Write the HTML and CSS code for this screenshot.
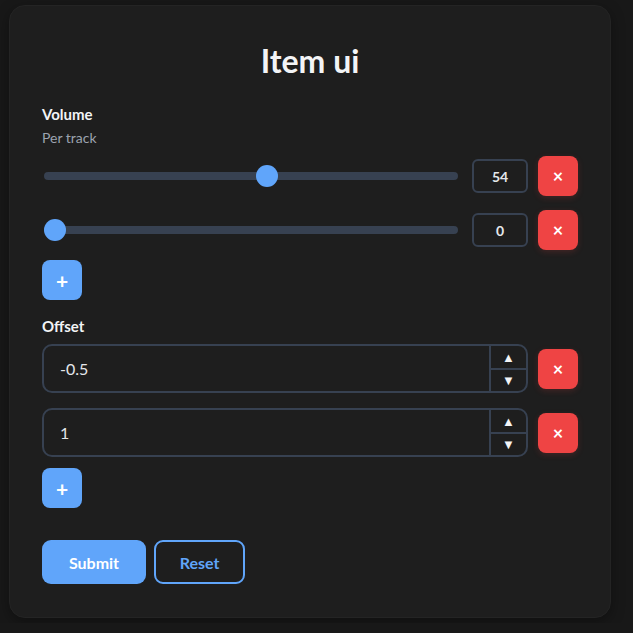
FILE: index.html
```html
<!DOCTYPE html>
<html lang="en">
<head>
<meta charset="utf-8">
<title>Item ui</title>
<link rel="stylesheet" href="styles.css">
</head>
<body>
<form class="card">
  <h1 class="title">Item ui</h1>

  <section class="group">
    <div class="label">Volume</div>
    <div class="hint">Per track</div>
    <div class="list list-sliders">
      <div class="row">
        <div class="slider-field">
          <input class="range" type="range" min="0" max="100" value="54">
          <div class="value-box">54</div>
        </div>
        <button type="button" class="btn-remove">×</button>
      </div>
      <div class="row">
        <div class="slider-field">
          <input class="range" type="range" min="0" max="100" value="0">
          <div class="value-box">0</div>
        </div>
        <button type="button" class="btn-remove">×</button>
      </div>
    </div>
    <button type="button" class="btn-add">+</button>
  </section>

  <section class="group group-offset">
    <div class="label">Offset</div>
    <div class="list list-numbers">
      <div class="row">
        <div class="number-field">
          <input class="number-input" type="text" value="-0.5">
          <div class="spin">
            <span class="spin-btn">▲</span>
            <span class="spin-btn">▼</span>
          </div>
        </div>
        <button type="button" class="btn-remove">×</button>
      </div>
      <div class="row">
        <div class="number-field">
          <input class="number-input" type="text" value="1">
          <div class="spin">
            <span class="spin-btn">▲</span>
            <span class="spin-btn">▼</span>
          </div>
        </div>
        <button type="button" class="btn-remove">×</button>
      </div>
    </div>
    <button type="button" class="btn-add btn-add-offset">+</button>
  </section>

  <div class="actions">
    <button type="submit" class="btn-submit">Submit</button>
    <button type="reset" class="btn-reset">Reset</button>
  </div>
</form>
</body>
</html>
```

FILE: styles.css
```css
* { box-sizing: border-box; }

html, body {
  margin: 0;
  background: #181818;
}

body {
  padding: 5px 9px;
  font-family: "Segoe UI", Lato, "Noto Sans", sans-serif;
  color: #f3f4f6;
}

.card {
  width: 602px;
  background: #1e1e1e;
  border: 1px solid #242424;
  border-radius: 16px;
  padding: 32px 32px 33px;
  box-shadow: 0 4px 14px rgba(0, 0, 0, 0.35);
  display: flex;
  flex-direction: column;
}

.title {
  margin: 5px 0 27px;
  font-size: 32px;
  line-height: 36px;
  font-weight: 700;
  text-align: center;
  color: #f3f4f6;
}

.group {
  display: flex;
  flex-direction: column;
  align-items: flex-start;
}

.group-offset {
  margin-top: 18px;
}

.label {
  font-size: 15px;
  line-height: 17px;
  font-weight: 700;
  color: #f3f4f6;
}

.hint {
  margin-top: 7px;
  font-size: 14px;
  line-height: 16px;
  color: #9ca3af;
}

.list {
  align-self: stretch;
  display: flex;
  flex-direction: column;
}

.list-sliders {
  margin-top: 10px;
  gap: 14px;
}

.list-numbers {
  margin-top: 9px;
  gap: 15px;
}

.row {
  display: flex;
  align-items: center;
  gap: 10px;
}

.slider-field {
  flex: 1;
  display: flex;
  align-items: center;
  gap: 12px;
}

.range {
  flex: 1;
  margin: 0 2px;
  height: 22px;
  -webkit-appearance: none;
  appearance: none;
  background: transparent;
}

.range::-webkit-slider-runnable-track {
  height: 8px;
  border-radius: 4px;
  background: #374151;
}

.range::-webkit-slider-thumb {
  -webkit-appearance: none;
  appearance: none;
  width: 22px;
  height: 22px;
  margin-top: -7px;
  border-radius: 50%;
  background: #60a5fa;
  border: none;
}

.value-box {
  width: 56px;
  height: 34px;
  border: 2px solid #374151;
  border-radius: 6px;
  display: flex;
  align-items: center;
  justify-content: center;
  font-size: 14px;
  font-weight: 700;
  color: #e5e7eb;
}

.btn-remove {
  flex: none;
  width: 40px;
  height: 40px;
  border: none;
  border-radius: 8px;
  background: #ef4444;
  color: #ffffff;
  font-family: inherit;
  font-size: 18px;
  font-weight: 700;
  line-height: 1;
  padding: 0;
  box-shadow: 0 2px 6px rgba(239, 68, 68, 0.18);
}

.btn-add {
  margin-top: 10px;
  width: 40px;
  height: 40px;
  border: none;
  border-radius: 8px;
  background: #60a5fa;
  color: #ffffff;
  font-family: inherit;
  font-size: 21px;
  font-weight: 700;
  line-height: 1;
  padding: 0;
}

.btn-add-offset {
  margin-top: 11px;
}

.number-field {
  flex: 1;
  height: 49px;
  display: flex;
  border: 2px solid #374151;
  border-radius: 10px;
  overflow: hidden;
}

.number-input {
  flex: 1;
  min-width: 0;
  border: none;
  background: transparent;
  padding: 0 16px;
  font-family: inherit;
  font-size: 16px;
  color: #e5e7eb;
  outline: none;
}

.spin {
  width: 37px;
  display: flex;
  flex-direction: column;
  border-left: 2px solid #374151;
}

.spin-btn {
  flex: 1;
  display: flex;
  align-items: center;
  justify-content: center;
  font-size: 13px;
  color: #f3f4f6;
}

.spin-btn + .spin-btn {
  border-top: 2px solid #374151;
}

.actions {
  margin-top: 32px;
  display: flex;
  gap: 8px;
}

.btn-submit,
.btn-reset {
  height: 44px;
  border-radius: 9px;
  font-family: inherit;
  font-size: 16px;
  font-weight: 700;
  padding: 0;
}

.btn-submit {
  width: 104px;
  border: none;
  background: #60a5fa;
  color: #ffffff;
}

.btn-reset {
  width: 91px;
  border: 2px solid #60a5fa;
  background: transparent;
  color: #60a5fa;
}
```
